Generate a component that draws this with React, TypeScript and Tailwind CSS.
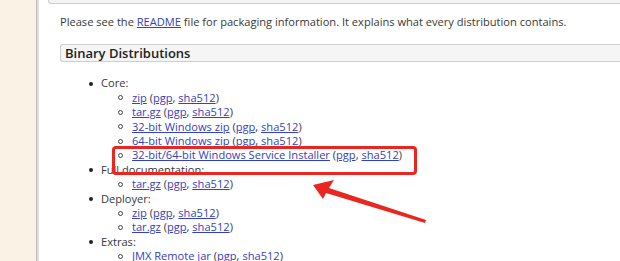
const link = 'text-[#3441c2] underline';

function Links({ name }: { name: string }) {
  return (
    <>
      <a className={link}>{name}</a> (<a className={link}>pgp</a>, <a className={link}>sha512</a>)
    </>
  );
}

function Main({ label, items }: { label: string; items: string[] }) {
  return (
    <li>
      <div className="flex h-[14.4px] items-center">
        <span className="ml-[29px] mr-[8px] h-[4px] w-[4px] rounded-full bg-[#222]" />
        <span>{label}</span>
      </div>
      <ul>
        {items.map((it) => (
          <li key={it} className="flex h-[14.4px] items-center">
            <span className="ml-[58px] mr-[9px] h-[5px] w-[5px] rounded-full border border-[#444]" />
            <span>
              <Links name={it} />
            </span>
          </li>
        ))}
      </ul>
    </li>
  );
}

export default function App() {
  return (
    <div className="relative flex h-[261px] w-[620px] overflow-hidden bg-white font-['Open_Sans',sans-serif] text-[11.1px] leading-[14.4px] text-[#383838]">
      <div className="w-[36px] shrink-0 bg-[#f9f2e5]" />
      <div className="w-[1px] shrink-0 bg-[#bdbdbd]" />
      <div className="w-[2px] shrink-0 bg-[#dedede]" />
      <div className="relative w-[600px] shrink-0">
        <div className="ml-[9px] h-[4px] w-[600px] rounded-bl-[3px] border-b border-l border-[#cfcfcf] bg-[#f3f3f3]" />
        <div className="pl-[21px]">
          <p className="mt-[11px] whitespace-nowrap">
            Please see the <a className={link}>README</a> file for packaging information. It explains what every distribution contains.
          </p>
          <div className="mt-[15px] flex h-[18px] w-[600px] items-center rounded-l-[3px] border border-r-0 border-[#cfcfcf] bg-[#f5f5f5] pl-[4px] text-[13px] font-semibold text-[#222]">
            Binary Distributions
          </div>
          <ul className="mt-[14px] whitespace-nowrap">
            <Main
              label="Core:"
              items={['zip', 'tar.gz', '32-bit Windows zip', '64-bit Windows zip', '32-bit/64-bit Windows Service Installer']}
            />
            <Main label="Full documentation:" items={['tar.gz']} />
            <Main label="Deployer:" items={['zip', 'tar.gz']} />
            <Main label="Extras:" items={['JMX Remote jar']} />
          </ul>
        </div>
        <div className="absolute left-[73px] top-[146px] h-[29px] w-[305px] rounded-[4px] border-[3px] border-[#ea2620]" />
      </div>
      <svg className="absolute left-0 top-0" width="620" height="261" viewBox="0 0 620 261">
        <polygon points="313,185 334,180 329,188 426,220 425,223 326,193 323,199" fill="#ea2620" />
      </svg>
    </div>
  );
}
